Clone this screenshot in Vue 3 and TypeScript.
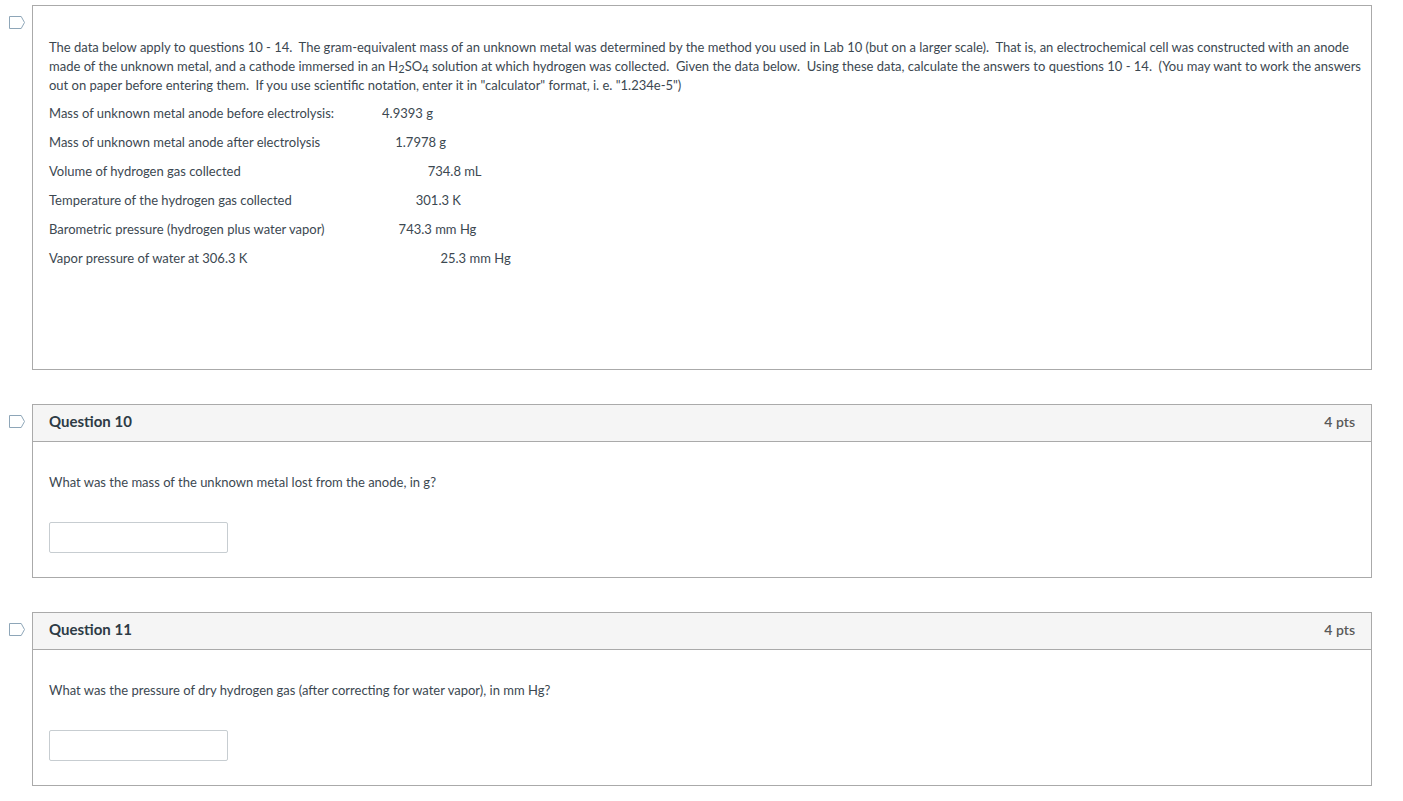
<script setup lang="ts">
interface Reading {
  label: string
  gap: number
  value: string
}

interface Question {
  id: number
  points: number
  text: string
}

const readings: Reading[] = [
  { label: 'Mass of unknown metal anode before electrolysis:', gap: 48, value: '4.9393 g' },
  { label: 'Mass of unknown metal anode after electrolysis', gap: 75, value: '1.7978 g' },
  { label: 'Volume of hydrogen gas collected', gap: 187, value: '734.8 mL' },
  { label: 'Temperature of the hydrogen gas collected', gap: 124, value: '301.3 K' },
  { label: 'Barometric pressure (hydrogen plus water vapor)', gap: 74, value: '743.3 mm Hg' },
  { label: 'Vapor pressure of water at 306.3 K', gap: 193, value: '25.3 mm Hg' },
]

const questions: Question[] = [
  { id: 10, points: 4, text: 'What was the mass of the unknown metal lost from the anode, in g?' },
  { id: 11, points: 4, text: 'What was the pressure of dry hydrogen gas (after correcting for water vapor), in mm Hg?' },
]
</script>

<template>
  <main class="quiz">
    <div class="item">
      <button class="flag" type="button" aria-label="Flag question group">
        <svg width="16" height="13" viewBox="0 0 16 13"><path d="M.5 .5H12.2L15.5 6.5L12.2 12.5H.5Z" /></svg>
      </button>
      <section class="card intro">
        <p>
          The data below apply to questions 10 - 14.&nbsp; The gram-equivalent mass of an unknown metal was determined by the method you used in Lab 10 (but on a larger scale).&nbsp; That is, an electrochemical cell was constructed with an anode made of the unknown metal, and a cathode immersed in an H<sub>2</sub>SO<sub>4</sub> solution at which hydrogen was collected.&nbsp; Given the data below.&nbsp; Using these data, calculate the answers to questions 10 - 14.&nbsp; (You may want to work the answers out on paper before entering them.&nbsp; If you use scientific notation, enter it in "calculator" format, i. e. "1.234e-5")
        </p>
        <div class="readings">
          <div v-for="r in readings" :key="r.label" class="reading">
            <span>{{ r.label }}</span><span :style="{ marginLeft: r.gap + 'px' }">{{ r.value }}</span>
          </div>
        </div>
      </section>
    </div>
    <div v-for="q in questions" :key="q.id" class="item">
      <button class="flag" type="button" :aria-label="`Flag question ${q.id}`">
        <svg width="16" height="13" viewBox="0 0 16 13"><path d="M.5 .5H12.2L15.5 6.5L12.2 12.5H.5Z" /></svg>
      </button>
      <section class="card">
        <header class="head">
          <h2>Question {{ q.id }}</h2>
          <span class="points">{{ q.points }} pts</span>
        </header>
        <div class="body">
          <label :for="`answer-${q.id}`">{{ q.text }}</label>
          <input :id="`answer-${q.id}`" type="text" />
        </div>
      </section>
    </div>
  </main>
</template>

<style scoped>
.quiz {
  display: flex;
  flex-direction: column;
  gap: 34px;
  padding: 5px 31px 15px 9px;
  color: #3c4851;
  font: 13px/19px Lato, "Liberation Sans", sans-serif;
}
.item {
  display: flex;
  align-items: flex-start;
  gap: 7px;
}
.flag {
  flex: none;
  width: 16px;
  height: 13px;
  margin: 11px 0 0;
  padding: 0;
  border: 0;
  background: none;
}
.flag svg {
  display: block;
  fill: #fff;
  stroke: #8ea6b8;
}
.card {
  flex: 1;
  min-width: 0;
  box-sizing: border-box;
  border: 1px solid #aaa;
}
.intro {
  padding: 32px 8px 101px 16px;
}
p {
  margin: 0 0 9px;
}
.readings {
  display: grid;
  gap: 10px;
}
.reading {
  display: flex;
}
sub {
  font-size: 11px;
  line-height: 1;
  vertical-align: -2px;
}
.head {
  display: flex;
  align-items: center;
  justify-content: space-between;
  padding: 7px 16px 10px;
  background: #f5f5f5;
  border-bottom: 1px solid #aaa;
}
h2 {
  margin: 0;
  font-size: 15px;
  font-weight: 700;
  color: #2d3b45;
}
.points {
  font-size: 14px;
  font-weight: 600;
  color: #595959;
}
.body {
  padding: 31px 16px 24px;
}
label {
  display: block;
}
input {
  display: block;
  box-sizing: border-box;
  width: 179px;
  height: 31px;
  margin-top: 30px;
  padding: 4px 8px;
  border: 1px solid #c7cdd1;
  border-radius: 2px;
  font: inherit;
  color: inherit;
}
</style>

<style>
body {
  margin: 0;
  background: #fff;
}
</style>
